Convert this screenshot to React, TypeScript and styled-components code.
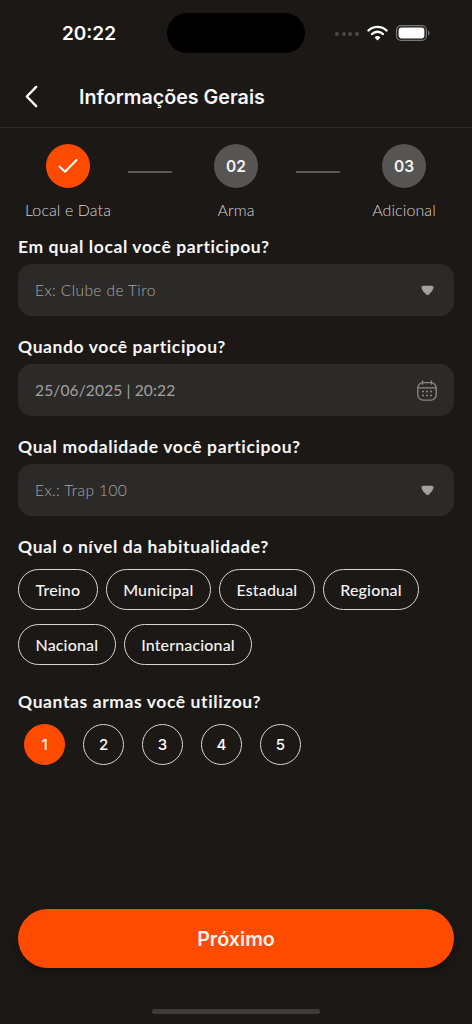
import * as React from "react"
import styled, { createGlobalStyle } from "styled-components"

const color = {
  bg: "#1b1816",
  field: "#2c2a29",
  orange: "#ff4b00",
  white: "#ffffff",
  step: "#565554",
  muted: "#8f8d8c",
  border: "#d8d6d5",
}

const bodyFont = `"Lato", "Noto Sans", sans-serif`
const uiFont = `"Inter", "Liberation Sans", sans-serif`

const GlobalStyle = createGlobalStyle`
  html, body {
    margin: 0;
    padding: 0;
    background: ${color.bg};
  }
  * {
    box-sizing: border-box;
  }
`

const Screen = styled.div`
  display: flex;
  flex-direction: column;
  width: 472px;
  height: 1024px;
  overflow: hidden;
  background: ${color.bg};
  color: ${color.white};
  font-family: ${bodyFont};
`

const StatusBar = styled.div`
  display: grid;
  grid-template-columns: 167px 138px 1fr;
  align-items: center;
  height: 40px;
  margin-top: 13px;
`

const Time = styled.div`
  padding-left: 11px;
  text-align: center;
  font-family: ${uiFont};
  font-size: 19px;
  font-weight: 600;
`

const Island = styled.div`
  height: 40px;
  border-radius: 20px;
  background: #000;
`

const StatusIcons = styled.div`
  display: flex;
  align-items: center;
  padding-left: 30px;
`

const Dots = styled.div`
  display: flex;
  gap: 2.5px;
  margin-right: 8px;
  margin-top: 2px;
`

const Dot = styled.span`
  width: 4px;
  height: 4px;
  border-radius: 50%;
  background: #4c4a49;
`

const Header = styled.header`
  display: flex;
  align-items: center;
  height: 63px;
  margin-top: 12px;
  padding-top: 1px;
  padding-left: 25px;
  border-bottom: 1.5px solid #2d2b29;
`

const Title = styled.h1`
  margin: 0 0 0 41px;
  font-family: ${uiFont};
  font-size: 19.7px;
  font-weight: 600;
  color: #f6f6f6;
`

const Stepper = styled.div`
  display: flex;
  align-items: flex-start;
  padding: 16px 0 0 13px;
`

const Step = styled.div`
  display: flex;
  flex-direction: column;
  align-items: center;
  width: 110px;
  flex: none;
`

const StepCircle = styled.div<{ $done?: boolean }>`
  display: flex;
  align-items: center;
  justify-content: center;
  width: 44px;
  height: 44px;
  border-radius: 50%;
  background: ${(p) => (p.$done ? color.orange : color.step)};
  font-family: ${uiFont};
  font-size: 15.5px;
  font-weight: 600;
  color: #f3f3f3;
`

const StepLabel = styled.div`
  margin-top: 12px;
  line-height: 20px;
  font-size: 16px;
  font-weight: 300;
  letter-spacing: 0.1px;
  color: #d4d3d2;
  white-space: nowrap;
`

const StepLine = styled.div`
  flex: none;
  width: 44px;
  height: 2px;
  margin: 27px 9.5px 0 4.5px;
  background: #5a5958;
`

const Form = styled.div`
  display: flex;
  flex-direction: column;
  padding: 0 18px;
  margin-top: 17px;
`

const Question = styled.div`
  height: 20px;
  line-height: 20px;
  font-size: 17.5px;
  font-weight: 700;
  letter-spacing: 0.6px;
  color: #f5f5f5;
  white-space: nowrap;
`

const Field = styled.div<{ $filled?: boolean }>`
  display: flex;
  align-items: center;
  justify-content: space-between;
  height: 52px;
  margin: 7px 0 21px;
  padding: 0 17px;
  border-radius: 14px;
  background: ${color.field};
  font-size: 15.5px;
  font-weight: ${(p) => (p.$filled ? 400 : 300)};
  letter-spacing: ${(p) => (p.$filled ? "0.15px" : "0.4px")};
  color: ${(p) => (p.$filled ? "#a3a1a0" : "#a8a6a5")};
`

const Chips = styled.div`
  display: flex;
  flex-wrap: wrap;
  gap: 14px 8px;
  margin: 12px 0 27px;
`

const Chip = styled.div`
  display: flex;
  align-items: center;
  justify-content: center;
  height: 41px;
  padding: 0 16.5px;
  border: 1.3px solid ${color.border};
  border-radius: 21px;
  font-size: 16px;
  font-weight: 500;
  letter-spacing: 0.15px;
  color: #f4f4f4;
`

const Counts = styled.div`
  display: flex;
  gap: 18px;
  margin-top: 12px;
  padding-left: 6px;
`

const Count = styled.div<{ $active?: boolean }>`
  display: flex;
  align-items: center;
  justify-content: center;
  width: 41px;
  height: 41px;
  border-radius: 50%;
  border: 1.3px solid ${(p) => (p.$active ? color.orange : color.border)};
  background: ${(p) => (p.$active ? color.orange : "transparent")};
  font-family: ${uiFont};
  font-size: 15px;
  font-weight: 500;
`

const Footer = styled.div`
  display: flex;
  flex-direction: column;
  align-items: center;
  margin-top: auto;
  padding: 0 18px 10px;
`

const NextButton = styled.button`
  width: 100%;
  height: 59px;
  border: 0;
  border-radius: 30px;
  background: ${color.orange};
  box-shadow: 0 4px 10px rgba(0, 0, 0, 0.3);
  color: #f7f3f1;
  font-family: ${uiFont};
  font-size: 19.7px;
  font-weight: 600;
`

const HomeBar = styled.div`
  width: 168px;
  height: 5px;
  margin-top: 41px;
  border-radius: 3px;
  background: #3d3c3b;
`

const Wifi = () => (
  <svg width="21" height="16" viewBox="0 0 21 16" style={{ marginRight: 8 }}>
    <path d="M1.5 5.5a13 13 0 0 1 18 0" fill="none" stroke="#fff" strokeWidth="2.4" strokeLinecap="round" />
    <path d="M5 9a8 8 0 0 1 11 0" fill="none" stroke="#fff" strokeWidth="2.4" strokeLinecap="round" />
    <path d="M10.5 15.5 7.6 12.4a4.2 4.2 0 0 1 5.8 0z" fill="#fff" />
  </svg>
)

const Battery = () => (
  <svg width="34" height="16" viewBox="0 0 34 16">
    <rect x="0.6" y="0.6" width="29.8" height="14.8" rx="4.4" fill="none" stroke="#777" strokeWidth="1.2" />
    <rect x="2.6" y="2.6" width="25.8" height="10.8" rx="2.8" fill="#fff" />
    <path d="M32 5.5c1 .3 1.5 1.3 1.5 2.5s-.5 2.2-1.5 2.5z" fill="#777" />
  </svg>
)

const Back = () => (
  <svg width="13" height="23" viewBox="0 0 13 23">
    <path d="M11.2 1.8 1.8 11.5l9.4 9.7" fill="none" stroke="#fff" strokeWidth="2.4" strokeLinecap="round" strokeLinejoin="round" />
  </svg>
)

const Check = () => (
  <svg width="20" height="16" viewBox="0 0 20 16">
    <path d="M1.5 8.6 7 13.8 18.5 2" fill="none" stroke="#fff" strokeWidth="2" strokeLinecap="round" strokeLinejoin="round" />
  </svg>
)

const Caret = () => (
  <svg width="13" height="11" viewBox="0 0 12 10" style={{ marginRight: 3 }}>
    <path d="M2.2.6h7.6c1.3 0 2 .9 1.7 2C11 4.500 9 7 7.200 8.700a1.800 1.800 0 0 1-2.400 0C3 7 1 4.500.5 2.600.2 1.500.9.600 2.200.6z" fill="#a3a2a1" />
  </svg>
)

const Calendar = () => (
  <svg width="20" height="21" viewBox="0 0 20 21" fill="none" stroke="#8c8a89" strokeWidth="1.3">
    <rect x="0.8" y="2.6" width="18.4" height="17.6" rx="5.5" />
    <path d="M1 7.8h18M5.5.8v3.4M14.5.8v3.4" strokeLinecap="round" />
    <g fill="#8c8a89" stroke="none">
      <circle cx="6" cy="11.5" r="1" />
      <circle cx="10" cy="11.5" r="1" />
      <circle cx="14" cy="11.5" r="1" />
      <circle cx="6" cy="15.5" r="1" />
      <circle cx="10" cy="15.5" r="1" />
      <circle cx="14" cy="15.5" r="1" />
    </g>
  </svg>
)

const levels = ["Treino", "Municipal", "Estadual", "Regional", "Nacional", "Internacional"]
const counts = [1, 2, 3, 4, 5]

export default function App() {
  return (
    <Screen>
      <GlobalStyle />
      <StatusBar>
        <Time>20:22</Time>
        <Island />
        <StatusIcons>
          <Dots>
            <Dot />
            <Dot />
            <Dot />
            <Dot />
          </Dots>
          <Wifi />
          <Battery />
        </StatusIcons>
      </StatusBar>
      <Header>
        <Back />
        <Title>Informações Gerais</Title>
      </Header>
      <Stepper>
        <Step>
          <StepCircle $done>
            <Check />
          </StepCircle>
          <StepLabel>Local e Data</StepLabel>
        </Step>
        <StepLine />
        <Step>
          <StepCircle>02</StepCircle>
          <StepLabel>Arma</StepLabel>
        </Step>
        <StepLine />
        <Step>
          <StepCircle>03</StepCircle>
          <StepLabel>Adicional</StepLabel>
        </Step>
      </Stepper>
      <Form>
        <Question>Em qual local você participou?</Question>
        <Field>
          Ex: Clube de Tiro
          <Caret />
        </Field>
        <Question>Quando você participou?</Question>
        <Field $filled>
          25/06/2025 | 20:22
          <Calendar />
        </Field>
        <Question>Qual modalidade você participou?</Question>
        <Field>
          Ex.: Trap 100
          <Caret />
        </Field>
        <Question>Qual o nível da habitualidade?</Question>
        <Chips>
          {levels.map((level) => (
            <Chip key={level}>{level}</Chip>
          ))}
        </Chips>
        <Question>Quantas armas você utilizou?</Question>
        <Counts>
          {counts.map((n) => (
            <Count key={n} $active={n === 1}>
              {n}
            </Count>
          ))}
        </Counts>
      </Form>
      <Footer>
        <NextButton>Próximo</NextButton>
        <HomeBar />
      </Footer>
    </Screen>
  )
}
